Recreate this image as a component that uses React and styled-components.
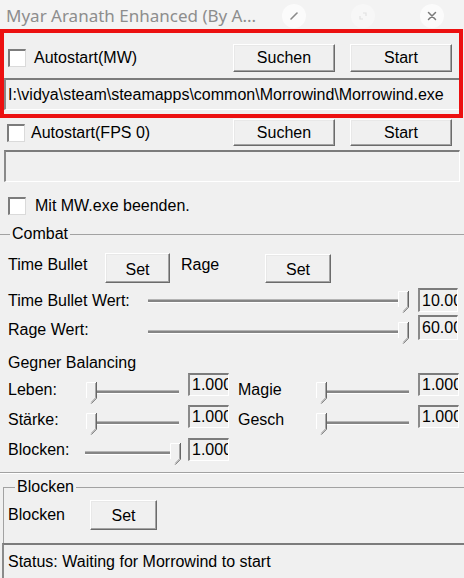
import React from 'react';
import styled, { createGlobalStyle } from 'styled-components';

const Global = createGlobalStyle`
  html, body { margin: 0; padding: 0; background: #f0f0f0; }
  body { width: 464px; height: 578px; overflow: hidden; font-family: "Liberation Sans", Arial, sans-serif; }
  * { box-sizing: border-box; }
`;

const Window = styled.div`
  position: relative;
  width: 464px;
  height: 578px;
  overflow: hidden;
  display: flex;
  flex-direction: column;
  background: #f0f0f0;
  color: #000;
  font-size: 16px;
  line-height: 18px;
`;

const TitleBar = styled.div`
  flex: none;
  height: 29px;
  display: flex;
  align-items: center;
  padding: 3px 0 0 6px;
  background: #f3f3f3;
`;

const Title = styled.div`
  font-family: "Noto Sans", "Open Sans", sans-serif;
  font-size: 17px;
  color: #8d8d8d;
  white-space: nowrap;
`;

const TitleIcons = styled.div`
  display: flex;
  align-items: center;
  gap: 45px;
  margin-left: auto;
  margin-right: 20px;
`;

const IconCircle = styled.div`
  width: 24px;
  height: 24px;
  border-radius: 50%;
  background: ${p => p.$bg || '#fbfbfb'};
  display: flex;
  align-items: center;
  justify-content: center;
`;

const Highlight = styled.div`
  position: absolute;
  left: 0;
  top: 29px;
  width: 463px;
  height: 89px;
  border: 4px solid #ec1010;
  pointer-events: none;
`;

const Row = styled.div`
  flex: none;
  display: flex;
  align-items: ${p => p.$align || 'center'};
  height: ${p => p.$h}px;
  margin-top: ${p => p.$mt || 0}px;
  padding-left: ${p => p.$pl ?? 0}px;
  padding-right: ${p => p.$pr ?? 0}px;
`;

const Check = styled.span`
  flex: none;
  width: 18px;
  height: 18px;
  background: #fff;
  border-top: 2px solid #7c7c7c;
  border-left: 2px solid #7c7c7c;
  border-right: 1px solid #dadada;
  border-bottom: 1px solid #dadada;
  margin-right: ${p => p.$gap || 9}px;
`;

const Label = styled.span`
  flex: none;
  white-space: nowrap;
  width: ${p => (p.$w ? `${p.$w}px` : 'auto')};
  margin-top: ${p => p.$mt || 0}px;
  margin-left: ${p => p.$ml || 0}px;
  align-self: ${p => (p.$mt ? 'flex-start' : 'auto')};
`;

const ButtonPair = styled.div`
  display: flex;
  gap: 15px;
  margin-left: auto;
`;

const Button = styled.button`
  flex: none;
  width: ${p => p.$w}px;
  height: ${p => p.$h}px;
  padding: ${p => p.$pt || 0}px 0 0 0;
  font-family: "Liberation Sans", Arial, sans-serif;
  font-size: 16px;
  color: #000;
  background: #f0f0f0;
  border: 1px solid;
  border-color: #ffffff #6b6b6b #6b6b6b #ffffff;
  box-shadow: inset -1px -1px 0 #a3a3a3, inset 1px 1px 0 #e8e8e8;
`;

const Field = styled.div`
  flex: none;
  height: 32px;
  margin: ${p => p.$mt || 0}px 4px 0 4px;
  padding-left: 2px;
  display: flex;
  align-items: center;
  background: #f0f0f0;
  border-top: 2px solid #7c7c7c;
  border-left: 2px solid #8a8a8a;
  border-right: 1px solid #ffffff;
  border-bottom: 1px solid #ffffff;
  white-space: nowrap;
  overflow: hidden;
`;

const Group = styled.fieldset`
  flex: none;
  width: 490px;
  margin: ${p => p.$mt}px 0 0 ${p => p.$ml}px;
  padding: 0;
  min-width: 0;
  border: 1px solid #a2a2a2;
  border-bottom: ${p => (p.$noBottom ? 'none' : '1px solid #a2a2a2')};
  box-shadow: ${p => (p.$noBottom ? 'none' : '0 1px 0 #ffffff')};
`;

const Legend = styled.legend`
  margin-left: 11px;
  padding: 0 2px;
  font-size: 16px;
  line-height: 18px;
`;

const GroupBody = styled.div`
  display: flex;
  flex-direction: column;
  padding: ${p => p.$pt}px 0 ${p => p.$pb}px ${p => p.$pl}px;
`;

const SliderWrap = styled.div`
  position: relative;
  flex: none;
  width: ${p => p.$w}px;
  height: 22px;
  margin-top: ${p => p.$mt || 0}px;
  align-self: flex-start;
`;

const Track = styled.div`
  margin-top: 8px;
  height: 4px;
  border-top: 1px solid #b4b4b4;
  background: #858585;
  border-bottom: 1px solid #ffffff;
`;

const ThumbBox = styled.div`
  position: absolute;
  top: 0;
  width: 11px;
  height: 22px;
  display: flex;
`;

const ValueBox = styled.div`
  flex: none;
  width: ${p => p.$w || 40}px;
  height: ${p => p.$h}px;
  margin-left: ${p => p.$ml || 0}px;
  padding-left: 2px;
  display: flex;
  align-items: center;
  overflow: hidden;
  white-space: nowrap;
  background: #f0f0f0;
  border-top: 2px solid #7c7c7c;
  border-left: 2px solid #8a8a8a;
  border-right: 1px solid #ffffff;
  border-bottom: 1px solid #ffffff;
`;

const StatusBar = styled.div`
  flex: none;
  height: 35px;
  margin-left: 2px;
  padding: 0 0 0 4px;
  display: flex;
  align-items: center;
  border-top: 2px solid #7c7c7c;
  border-left: 2px solid #8a8a8a;
  white-space: nowrap;
`;

const Thumb = () => (
  <svg width="11" height="22" viewBox="0 0 11 22">
    <path d="M0.5 0.5 H10.5 V16 L5.5 21.5 L0.5 16 Z" fill="#f0f0f0" />
    <path d="M0.5 16 V0.5 H10" stroke="#ffffff" fill="none" />
    <path d="M10.5 0 V16.2 L5.2 21.6" stroke="#666666" fill="none" />
    <path d="M9.5 1 V15.8 L5.3 20.2" stroke="#a6a6a6" fill="none" />
  </svg>
);

const Slider = ({ w, value, mt }) => (
  <SliderWrap $w={w} $mt={mt}>
    <Track />
    <ThumbBox style={{ left: `${Math.round(value * (w - 11))}px` }}>
      <Thumb />
    </ThumbBox>
  </SliderWrap>
);

const PencilIcon = () => (
  <svg width="12" height="12" viewBox="0 0 12 12">
    <path d="M3 9 L9 3" stroke="#8a8a8a" strokeWidth="1.6" strokeLinecap="round" />
  </svg>
);

const RestoreIcon = () => (
  <svg width="12" height="12" viewBox="0 0 12 12">
    <path d="M3 6 V9 H6 M6 3 H9 V6" stroke="#e2e2e2" strokeWidth="1.2" fill="none" />
  </svg>
);

const CloseIcon = () => (
  <svg width="12" height="12" viewBox="0 0 12 12">
    <path d="M2.5 2.5 L9.5 9.5 M9.5 2.5 L2.5 9.5" stroke="#7a7a7a" strokeWidth="1.5" strokeLinecap="round" />
  </svg>
);

const BalanceRow = ({ mt, labelMt, thumbMt, left, right }) => (
  <Row $h={23} $mt={mt} $align="flex-start">
    <Label $w={left.lw} $mt={labelMt}>{left.label}</Label>
    <Slider w={left.sw} value={left.v} mt={thumbMt} />
    <ValueBox $h={23} $w={41} $ml={left.gap}>1.000</ValueBox>
    {right && (
      <>
        <Label $w={78} $mt={labelMt} $ml={9}>{right.label}</Label>
        <Slider w={93} value={0} mt={thumbMt} />
        <ValueBox $h={23} $w={41} $ml={9}>1.000</ValueBox>
      </>
    )}
  </Row>
);

export default function App() {
  return (
    <Window>
      <Global />
      <TitleBar>
        <Title>Myar Aranath Enhanced (By A...</Title>
        <TitleIcons>
          <IconCircle><PencilIcon /></IconCircle>
          <IconCircle $bg="#f7f7f7"><RestoreIcon /></IconCircle>
          <IconCircle><CloseIcon /></IconCircle>
        </TitleIcons>
      </TitleBar>

      <Row $h={28} $mt={15} $pl={8} $pr={12}>
        <Check $gap={8} />
        <Label>Autostart(MW)</Label>
        <ButtonPair>
          <Button $w={102} $h={28}>Suchen</Button>
          <Button $w={102} $h={28}>Start</Button>
        </ButtonPair>
      </Row>
      <Field $mt={6}>I:\vidya\steam\steamapps\common\Morrowind\Morrowind.exe</Field>

      <Row $h={27} $mt={9} $pl={7} $pr={12}>
        <Check $gap={6} />
        <Label>Autostart(FPS 0)</Label>
        <ButtonPair>
          <Button $w={102} $h={27}>Suchen</Button>
          <Button $w={102} $h={27}>Start</Button>
        </ButtonPair>
      </Row>
      <Field $mt={4} />

      <Row $h={24} $mt={12} $pl={8}>
        <Check $gap={9} />
        <Label>Mit MW.exe beenden.</Label>
      </Row>

      <Group $mt={7} $ml={-2}>
        <Legend>Combat</Legend>
        <GroupBody $pt={10} $pb={11} $pl={9}>
          <Row $h={30}>
            <Label $w={97} $mt={3}>Time Bullet</Label>
            <Button $w={65} $h={30} $pt={3}>Set</Button>
            <Label $w={84} $mt={3} $ml={11}>Rage</Label>
            <Button $w={66} $h={29} $pt={3}>Set</Button>
          </Row>
          <Row $h={24} $mt={5} $align="flex-start">
            <Label $w={140} $mt={4}>Time Bullet Wert:</Label>
            <Slider w={261} value={1} mt={3} />
            <ValueBox $h={24} $w={40} $ml={9}>10.000</ValueBox>
          </Row>
          <Row $h={25} $mt={3} $align="flex-start">
            <Label $w={140} $mt={6}>Rage Wert:</Label>
            <Slider w={261} value={1} mt={7} />
            <ValueBox $h={25} $w={40} $ml={9}>60.000</ValueBox>
          </Row>
          <Row $h={20} $mt={13}>
            <Label>Gegner Balancing</Label>
          </Row>
          <BalanceRow
            mt={0}
            labelMt={8}
            thumbMt={9}
            left={{ label: 'Leben:', lw: 78, sw: 93, v: 0, gap: 9 }}
            right={{ label: 'Magie' }}
          />
          <BalanceRow
            mt={9}
            labelMt={6}
            thumbMt={8}
            left={{ label: 'Stärke:', lw: 78, sw: 93, v: 0, gap: 9 }}
            right={{ label: 'Gesch' }}
          />
          <BalanceRow
            mt={10}
            labelMt={3}
            thumbMt={5}
            left={{ label: 'Blocken:', lw: 77, sw: 96, v: 1, gap: 7 }}
          />
        </GroupBody>
      </Group>

      <Group $mt={5} $ml={3} $noBottom>
        <Legend>Blocken</Legend>
        <GroupBody $pt={4} $pb={13} $pl={4}>
          <Row $h={30}>
            <Label $w={82}>Blocken</Label>
            <Button $w={67} $h={30} $pt={2}>Set</Button>
          </Row>
        </GroupBody>
      </Group>

      <StatusBar>Status: Waiting for Morrowind to start</StatusBar>

      <Highlight />
    </Window>
  );
}
